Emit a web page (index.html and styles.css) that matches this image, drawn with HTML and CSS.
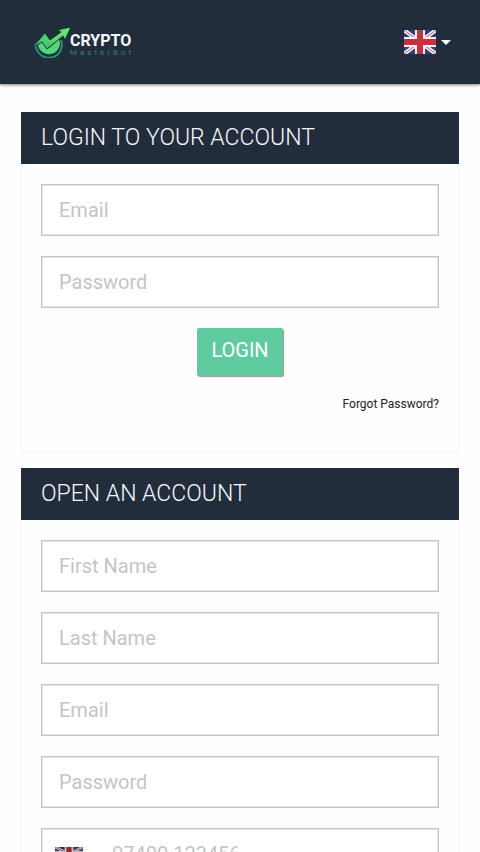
FILE: index.html
```html
<!DOCTYPE html>
<html lang="en">
<head>
<meta charset="utf-8">
<meta name="viewport" content="width=device-width, initial-scale=1">
<title>Crypto MasterBot</title>
<link rel="stylesheet" href="styles.css">
</head>
<body>
<svg class="defs" aria-hidden="true">
  <symbol id="uk" viewBox="0 0 32 24" preserveAspectRatio="none">
    <path class="flag-blue" d="M0 0h32v24H0z"/>
    <path class="flag-saltire" d="M0 0l32 24M32 0L0 24"/>
    <path class="flag-diagonal" d="M0 0l32 24M32 0L0 24"/>
    <path class="flag-white" d="M11 0h10v7h11v10H21v7H11v-7H0V7h11z"/>
    <path class="flag-red" d="M13 0h6v9h13v6H19v9h-6v-9H0V9h13z"/>
  </symbol>
</svg>
<header class="topbar">
  <a class="brand" href="#" aria-label="Crypto MasterBot">
    <svg class="brand-mark" viewBox="0 0 41 32" aria-hidden="true">
      <defs>
        <linearGradient id="leaf" x1="0" y1="1" x2="1" y2="0">
          <stop offset="0" stop-color="#2fa474"/>
          <stop offset="0.5" stop-color="#55dc70"/>
          <stop offset="1" stop-color="#65ee68"/>
        </linearGradient>
      </defs>
      <path d="M7 17A13 13 0 1 0 32 14" fill="none" stroke="#279174" stroke-width="2"/>
      <path d="M9 19l5-4 6 7 10-9a11 11 0 1 1-21 6z" fill="#52d779"/>
      <path d="M2 23L16 7l5 7L32 6l-4-2 14-3-6 13-2-4-16 13-5-7z" fill="url(#leaf)" stroke="#222d3c" stroke-width="1"/>
    </svg>
    <span class="brand-text"><span class="brand-name">CRYPTO</span><span class="brand-sub">MasterBot</span></span>
  </a>
  <button class="language" type="button" aria-label="Language: English">
    <svg class="language-flag" aria-hidden="true"><use href="#uk"/></svg>
    <span class="caret"></span>
  </button>
</header>
<main class="content">
  <section class="panel">
    <h2 class="panel-title">LOGIN TO YOUR ACCOUNT</h2>
    <form class="panel-body login-form">
      <input class="field" type="email" placeholder="Email" aria-label="Email">
      <input class="field" type="password" placeholder="Password" aria-label="Password">
      <button class="submit" type="submit">LOGIN</button>
      <a class="forgot" href="#">Forgot Password?</a>
    </form>
  </section>
  <section class="panel">
    <h2 class="panel-title">OPEN AN ACCOUNT</h2>
    <form class="panel-body">
      <input class="field" type="text" placeholder="First Name" aria-label="First Name">
      <input class="field" type="text" placeholder="Last Name" aria-label="Last Name">
      <input class="field" type="email" placeholder="Email" aria-label="Email">
      <input class="field" type="password" placeholder="Password" aria-label="Password">
      <div class="field phone">
        <svg class="phone-flag" aria-hidden="true"><use href="#uk"/></svg>
        <input class="phone-input" type="tel" placeholder="07400 123456" aria-label="Phone">
      </div>
    </form>
  </section>
</main>
</body>
</html>
```
FILE: styles.css
```css
* {
  box-sizing: border-box;
}

body {
  display: flex;
  flex-direction: column;
  height: 100vh;
  margin: 0;
  background: #fefefe;
  font-family: Roboto, "Liberation Sans", sans-serif;
}

.defs {
  position: absolute;
  width: 0;
  height: 0;
}

.flag-blue { fill: #2b3f83; }
.flag-saltire { stroke: #f5f3f8; stroke-width: 4; }
.flag-diagonal { stroke: #c94857; stroke-width: 1; }
.flag-white { fill: #f5f3f8; }
.flag-red { fill: #c9303e; }

.topbar {
  display: flex;
  flex: none;
  align-items: center;
  justify-content: space-between;
  height: 84px;
  padding: 0 29px;
  background: #222d3c;
  box-shadow: 0 1px 3px rgba(0, 0, 0, 0.5);
  z-index: 1;
}

.brand {
  display: flex;
  align-items: center;
  color: #f6f8fa;
  text-decoration: none;
}

.brand-mark {
  width: 41px;
  height: 32px;
}

.brand-text {
  display: flex;
  flex-direction: column;
  padding-top: 6px;
}

.brand-name {
  font-size: 16px;
  font-weight: 700;
  line-height: 16px;
}

.brand-sub {
  color: #378067;
  font-size: 8px;
  line-height: 8px;
  letter-spacing: 3px;
}

.language {
  display: flex;
  align-items: center;
  gap: 5px;
  padding: 0;
  border: 0;
  background: none;
}

.language-flag {
  width: 32px;
  height: 24px;
}

.caret {
  border: 5px solid transparent;
  border-top-color: #fff;
  border-bottom: 0;
}

.content {
  display: flex;
  flex: 1;
  flex-direction: column;
  gap: 15px;
  min-height: 0;
  padding: 28px 21px;
  overflow-y: auto;
  scrollbar-width: none;
}

.panel {
  flex: none;
}

.panel-title {
  margin: 0;
  padding: 0 20px;
  background: #222d3c;
  color: #f6f8fa;
  font-size: 23px;
  font-weight: 300;
  line-height: 52px;
}

.panel-body {
  display: flex;
  flex-direction: column;
  gap: 20px;
  padding: 20px 19px;
  border: 1px solid #f4f4f4;
  border-top: 0;
}

.field {
  width: 100%;
  height: 52px;
  padding: 0 17px;
  border: 1px solid #c4c4c4;
  border-radius: 0;
  background: #fff;
  box-shadow: inset 0 0 0 1px #e6e6e6;
  color: #333;
  font: 400 20px/24px Roboto, "Liberation Sans", sans-serif;
}

::placeholder {
  color: #c4c4c4;
  opacity: 1;
}

.submit {
  align-self: center;
  height: 48px;
  padding: 0 14px 4px;
  border: 0;
  border-radius: 2px;
  background: #5fcca0;
  box-shadow: 1px 1px 1px rgba(0, 0, 0, 0.4);
  color: #fff;
  font: 400 20px/24px Roboto, "Liberation Sans", sans-serif;
}

.forgot {
  align-self: flex-end;
  color: #222;
  font-size: 12px;
  line-height: 16px;
  text-decoration: none;
}

.login-form {
  padding-bottom: 40px;
}

.phone {
  display: flex;
  align-items: center;
  gap: 29px;
  padding: 0 13px;
}

.phone-flag {
  flex: none;
  width: 28px;
  height: 14px;
}

.phone-flag {
  filter: brightness(0.8);
}

.phone-input {
  flex: 1;
  min-width: 0;
  padding: 0;
  border: 0;
  background: none;
  color: #333;
  font: inherit;
}
```
